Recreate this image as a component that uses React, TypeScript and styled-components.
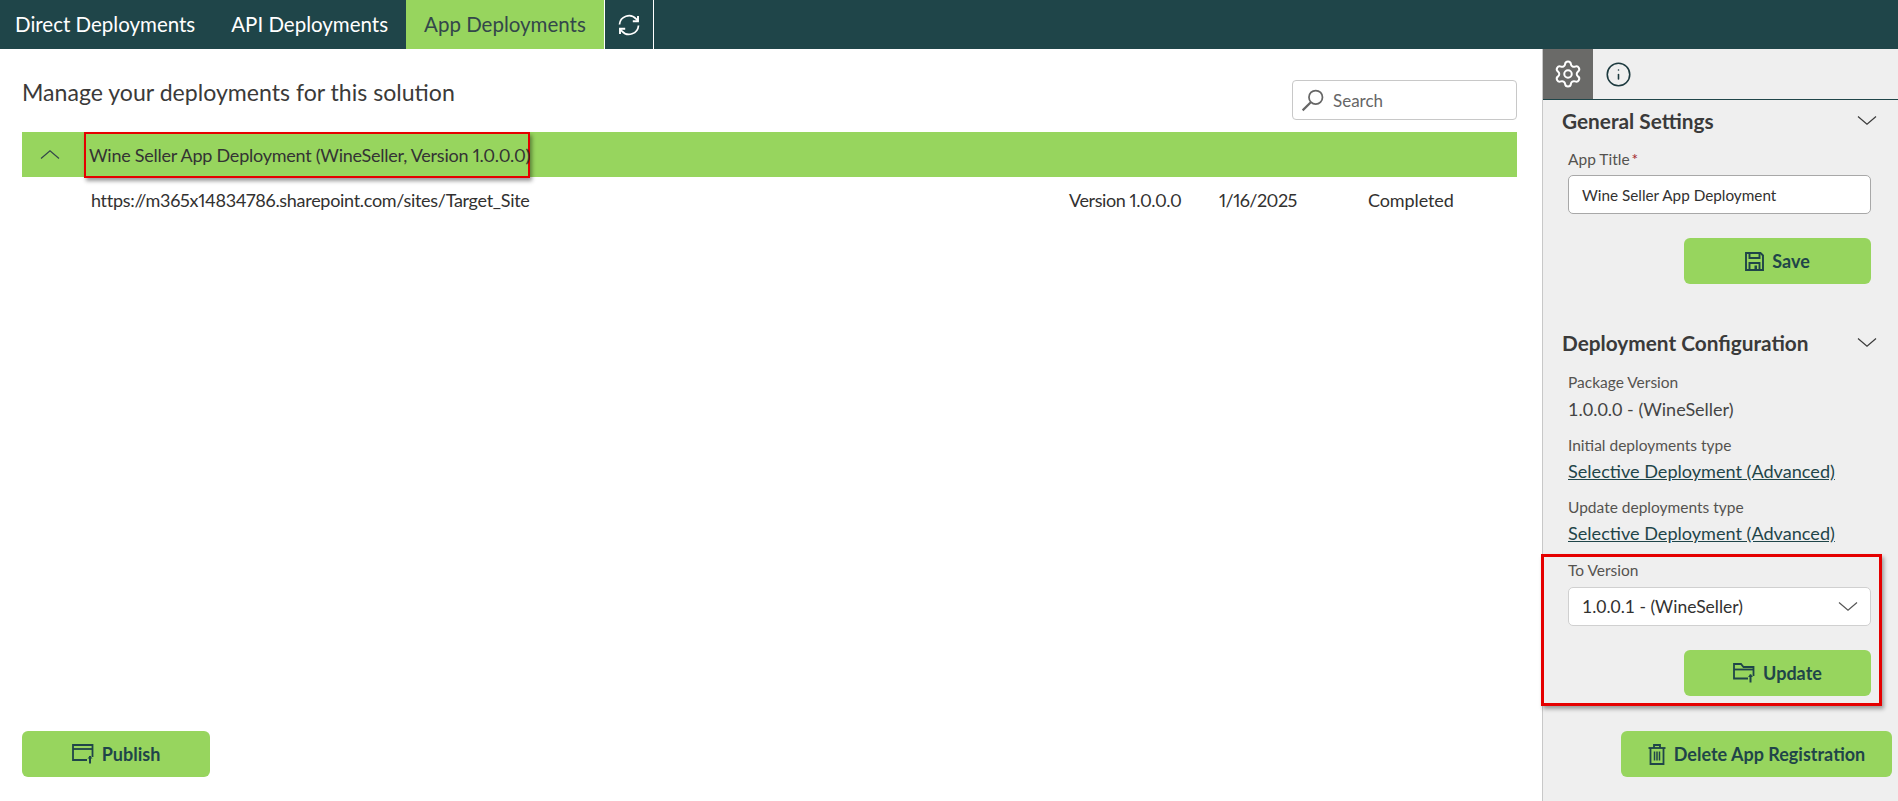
import styled, { createGlobalStyle } from "styled-components";
import { Info, Settings } from "lucide-react";

const GREEN = "#97d55e";
const DARK = "#1f4549";
const TEXT = "#323130";

const GlobalStyle = createGlobalStyle`
  html, body { margin: 0; padding: 0; }
  body {
    font-family: Lato, "Open Sans", sans-serif;
    color: ${TEXT};
    background: #fff;
  }
`;

const Page = styled.div`
  width: 1898px;
  height: 801px;
  display: flex;
  flex-direction: column;
  overflow: hidden;
`;

// Top tabs
const NavBar = styled.nav`
  height: 49px;
  flex: none;
  display: flex;
  background: ${DARK};
`;

const NavTab = styled.div<{ $active?: boolean }>`
  display: flex;
  align-items: center;
  padding: 0 18px 2px;
  font-size: 20.5px;
  color: ${(p) => (p.$active ? "#33474a" : "#fff")};
  background: ${(p) => (p.$active ? GREEN : "transparent")};

  &:first-child {
    padding-left: 15px;
  }
`;

const RefreshTab = styled.div`
  width: 48px;
  display: flex;
  align-items: center;
  justify-content: center;
  border-left: 1px solid #fff;
  border-right: 1px solid #fff;
  color: #fff;
`;

const Body = styled.div`
  flex: 1;
  display: flex;
  min-height: 0;
`;

// Left column
const Main = styled.main`
  width: 1495px;
  padding: 0 25px 24px 22px;
  box-sizing: content-box;
  display: flex;
  flex-direction: column;
`;

const MainHeader = styled.div`
  height: 83px;
  display: flex;
  align-items: flex-start;
  justify-content: space-between;
`;

const Title = styled.h1`
  margin: 28px 0 0;
  font-size: 23.1px;
  line-height: 30px;
  font-weight: 400;
  color: #3b3a39;
`;

const SearchBox = styled.div`
  margin-top: 31px;
  width: 225px;
  height: 40px;
  box-sizing: border-box;
  display: flex;
  align-items: center;
  gap: 8px;
  padding-left: 8px;
  border: 1px solid #c8c8c8;
  border-radius: 4px;
  font-size: 17px;
  color: #666;
`;

const GroupRow = styled.div`
  height: 45px;
  display: flex;
  align-items: center;
  background: ${GREEN};
`;

const GroupToggle = styled.div`
  width: 62px;
  padding-right: 7px;
  box-sizing: border-box;
  display: flex;
  justify-content: center;
  color: #33474a;
`;

const GroupTitle = styled.div`
  height: 46px;
  box-sizing: border-box;
  width: 446px;
  display: flex;
  align-items: center;
  padding-left: 3px;
  border: 2px solid #e50000;
  box-shadow: 2px 3px 4px rgba(0, 0, 0, 0.4);
  font-size: 18px;
  letter-spacing: -0.24px;
  font-variant-numeric: proportional-nums;
  white-space: nowrap;
  color: #333;
`;

const DeployRow = styled.div`
  height: 45px;
  display: flex;
  align-items: center;
  font-size: 18px;
  font-variant-numeric: proportional-nums;
  padding-left: 69px;
`;

const DeployCell = styled.span<{ $width?: number; $tight: number }>`
  width: ${(p) => (p.$width ? `${p.$width}px` : "auto")};
  letter-spacing: ${(p) => p.$tight}px;
`;

const Spacer = styled.div`
  flex: 1;
`;

const Button = styled.button<{ $width: number }>`
  width: ${(p) => p.$width}px;
  height: 46px;
  display: flex;
  align-items: center;
  justify-content: center;
  gap: 8px;
  border: none;
  border-radius: 6px;
  background: ${GREEN};
  color: ${DARK};
  font-family: inherit;
  font-size: 18px;
  font-weight: 700;
  padding: 0;
`;

// Right panel
const Panel = styled.aside`
  width: 355px;
  border-left: 1px solid #c8c8c8;
  background: #efefef;
  display: flex;
  flex-direction: column;
`;

const PanelTabs = styled.div`
  height: 50px;
  flex: none;
  display: flex;
  border-bottom: 1px solid ${DARK};
`;

const PanelTab = styled.div<{ $active?: boolean }>`
  width: 50px;
  display: flex;
  align-items: center;
  justify-content: center;
  background: ${(p) => (p.$active ? "#6a6a68" : "transparent")};
  color: ${(p) => (p.$active ? "#fff" : "#1d3a3f")};
`;

const Section = styled.section<{ $top: number }>`
  margin-top: ${(p) => p.$top}px;
  padding: 0 27px 0 19px;
`;

const SectionHead = styled.div`
  height: 30px;
  display: flex;
  align-items: center;
  justify-content: space-between;
  margin-right: -6px;
  font-size: 20.8px;
  font-weight: 700;
  color: #3a3a3a;
`;

const Fields = styled.div`
  padding-left: 6px;
`;

const Label = styled.div<{ $gap?: number }>`
  font-size: 15.5px;
  line-height: 20px;
  margin-top: ${(p) => p.$gap ?? 0}px;
  color: #55534f;
`;

const Required = styled.span`
  color: #a4262c;
  margin-left: 2px;
`;

const Input = styled.div`
  height: 39px;
  margin-top: 6px;
  box-sizing: border-box;
  display: flex;
  align-items: center;
  padding-left: 13px;
  background: #fff;
  border: 1px solid #a8a8a8;
  border-radius: 5px;
  font-size: 15.3px;
  color: ${TEXT};
`;

const Value = styled.div`
  font-size: 18px;
  line-height: 24px;
  margin: 5px 0 14px;
  color: #444;
`;

const LinkText = styled.a`
  display: block;
  font-size: 18.1px;
  line-height: 24px;
  margin: 4px 0 14px;
  color: #1f4549;
  text-decoration: underline;
`;

const ButtonRow = styled.div`
  display: flex;
  justify-content: flex-end;
  margin-top: 24px;
`;

const Callout = styled.div`
  margin: -5px -11px 0 -27px;
  padding: 3px 8px 7px 24px;
  border: 3px solid #e50000;
  box-shadow: 2px 3px 4px rgba(0, 0, 0, 0.35);
`;

const SelectBox = styled(Input)`
  justify-content: space-between;
  margin-top: 7px;
  padding-right: 12px;
  border-color: #d0d0d0;
  font-size: 17.5px;

  svg {
    color: #555;
  }
`;

const PanelFooter = styled.div`
  margin-top: auto;
  padding: 0 6px 24px 0;
  display: flex;
  justify-content: flex-end;
`;

const Chevron = ({ up }: { up?: boolean }) => (
  <svg width="20" height="9" viewBox="0 0 20 9" fill="none" stroke="currentColor" strokeWidth="1.2">
    <polyline points={up ? "1,8.5 10,0.8 19,8.5" : "1,0.5 10,8.2 19,0.5"} />
  </svg>
);

const RefreshIcon = () => (
  <svg width="24" height="24" viewBox="0 0 24 24" fill="none" stroke="currentColor" strokeWidth="1.7">
    <path d="M2.5 11.5a9.5 9.5 0 0 1 16.6-5.6L21 8" />
    <path d="M21 3v5.2h-5.2" strokeWidth="1.9" />
    <path d="M21.5 12.5a9.5 9.5 0 0 1-16.6 5.6L3 16" />
    <path d="M3 21v-5.2h5.2" strokeWidth="1.9" />
  </svg>
);

const SearchIcon = () => (
  <svg width="24" height="24" viewBox="0 0 22 22" fill="none" stroke="#666" strokeWidth="1.6">
    <circle cx="13.5" cy="8.5" r="6.2" />
    <line x1="9" y1="13" x2="1.5" y2="20.5" strokeWidth="2" />
  </svg>
);

const SaveIcon = () => (
  <svg width="19" height="19" viewBox="0 0 19 19" fill="none" stroke="currentColor" strokeWidth="1.9">
    <path d="M1 1h14.5L18 3.500V18H1z" />
    <path d="M4.500 1v5h10V1" />
    <path d="M4.500 18v-7h10v7" />
    <rect x="9.500" y="13.500" width="2.500" height="4" fill="currentColor" stroke="none" />
  </svg>
);

const PublishIcon = () => (
  <svg width="22" height="20" viewBox="0 0 22 20" fill="none" stroke="currentColor" strokeWidth="1.8">
    <path d="M15 16H1V1h19.500v12" />
    <path d="M1 5h19.500" />
    <path d="M18 19.500V12" strokeWidth="2" />
    <path d="M15.500 14.500 18 11.800l2.500 2.700" fill="currentColor" stroke="none" />
  </svg>
);

const FolderUpIcon = () => (
  <svg width="22" height="20" viewBox="0 0 22 20" fill="none" stroke="currentColor" strokeWidth="1.8">
    <path d="M15 15.500H1V1h7l2.500 3H20.500v9" />
    <path d="M1 6.500h19.500" />
    <path d="M17.500 19.500V11.500" strokeWidth="2" />
    <path d="M15 14 17.500 11.300 20 14" fill="currentColor" stroke="none" />
  </svg>
);

const TrashIcon = () => (
  <svg width="18" height="21" viewBox="0 0 18 21" fill="none" stroke="currentColor" strokeWidth="1.8">
    <path d="M0.500 4h17" />
    <path d="M6 4V1h6v3" />
    <path d="M2.500 4v16h13V4" />
    <path d="M6.500 7.500v9M9 7.500v9M11.500 7.500v9" strokeWidth="1.500" />
  </svg>
);

export default function App() {
  return (
    <Page>
      <GlobalStyle />
      <NavBar>
        <NavTab>Direct Deployments</NavTab>
        <NavTab>API Deployments</NavTab>
        <NavTab $active>App Deployments</NavTab>
        <RefreshTab>
          <RefreshIcon />
        </RefreshTab>
      </NavBar>
      <Body>
        <Main>
          <MainHeader>
            <Title>Manage your deployments for this solution</Title>
            <SearchBox>
              <SearchIcon />
              Search
            </SearchBox>
          </MainHeader>
          <GroupRow>
            <GroupToggle>
              <Chevron up />
            </GroupToggle>
            <GroupTitle>Wine Seller App Deployment (WineSeller, Version 1.0.0.0)</GroupTitle>
          </GroupRow>
          <DeployRow>
            <DeployCell $width={978} $tight={-0.3}>
              https://m365x14834786.sharepoint.com/sites/Target_Site
            </DeployCell>
            <DeployCell $width={150} $tight={-0.4}>
              Version 1.0.0.0
            </DeployCell>
            <DeployCell $width={149} $tight={-0.55}>
              1/16/2025
            </DeployCell>
            <DeployCell $tight={-0.1}>Completed</DeployCell>
          </DeployRow>
          <Spacer />
          <Button $width={188}>
            <PublishIcon />
            Publish
          </Button>
        </Main>
        <Panel>
          <PanelTabs>
            <PanelTab $active>
              <Settings size={30} strokeWidth={1.6} />
            </PanelTab>
            <PanelTab>
              <Info size={27} strokeWidth={1.4} />
            </PanelTab>
          </PanelTabs>
          <Section $top={5}>
            <SectionHead>
              General Settings
              <Chevron />
            </SectionHead>
            <Fields>
              <Label $gap={14}>
                App Title<Required>*</Required>
              </Label>
              <Input>Wine Seller App Deployment</Input>
              <ButtonRow>
                <Button $width={187}>
                  <SaveIcon />
                  Save
                </Button>
              </ButtonRow>
            </Fields>
          </Section>
          <Section $top={43}>
            <SectionHead>
              Deployment Configuration
              <Chevron />
            </SectionHead>
            <Fields>
              <Label $gap={15}>Package Version</Label>
              <Value>1.0.0.0 - (WineSeller)</Value>
              <Label>Initial deployments type</Label>
              <LinkText>Selective Deployment (Advanced)</LinkText>
              <Label>Update deployments type</Label>
              <LinkText>Selective Deployment (Advanced)</LinkText>
              <Callout>
                <Label>To Version</Label>
                <SelectBox>
                  1.0.0.1 - (WineSeller)
                  <Chevron />
                </SelectBox>
                <ButtonRow>
                  <Button $width={187}>
                    <FolderUpIcon />
                    Update
                  </Button>
                </ButtonRow>
              </Callout>
            </Fields>
          </Section>
          <PanelFooter>
            <Button $width={271}>
              <TrashIcon />
              Delete App Registration
            </Button>
          </PanelFooter>
        </Panel>
      </Body>
    </Page>
  );
}
